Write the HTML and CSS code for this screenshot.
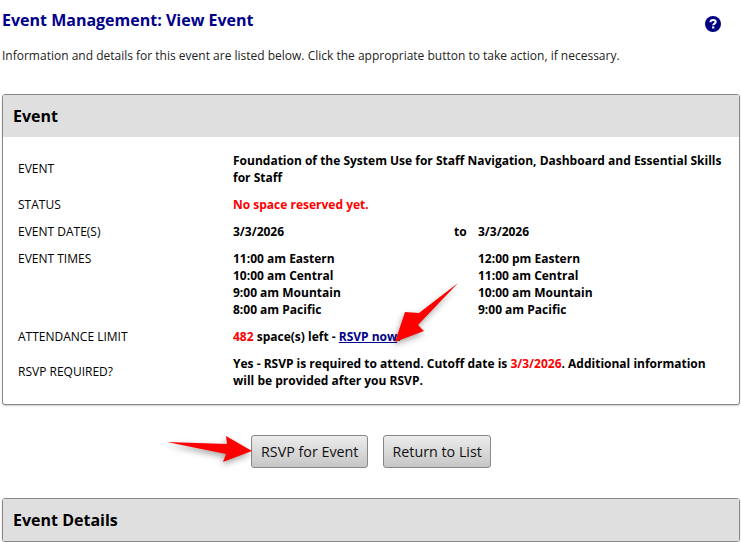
FILE: index.html
```html
<!DOCTYPE html>
<html lang="en">

<head>
    <meta charset="UTF-8">
    <title>Event Management: View Event</title>
    <link rel="stylesheet" href="styles.css">
</head>

<body>
    <div class="title-row">
        <h1>Event Management: View Event</h1>
        <svg class="help" width="16" height="16" viewBox="0 0 16 16">
            <circle cx="8" cy="8" r="8" fill="#000080"/>
            <path d="M5.4 6.2C5.5 4.7 6.6 3.9 8.1 3.9C9.6 3.9 10.7 4.8 10.7 6C10.7 7.6 8.2 7.6 8.2 9.3" fill="none" stroke="#fff" stroke-width="2"/>
            <rect x="7.1" y="10.4" width="2.2" height="2.1" fill="#fff"/>
        </svg>
    </div>
    <p class="intro">Information and details for this event are listed below. Click the appropriate button to take action, if necessary.</p>

    <div class="panel">
        <h2 class="panel-head">Event</h2>
        <div class="details">
            <div class="label mid">EVENT</div>
            <div class="value wide">Foundation of the System Use for Staff Navigation, Dashboard and Essential Skills for Staff</div>

            <div class="label">STATUS</div>
            <div class="value wide red">No space reserved yet.</div>

            <div class="label">EVENT DATE(S)</div>
            <div class="value">3/3/2026</div>
            <div class="value">to</div>
            <div class="value">3/3/2026</div>

            <div class="label">EVENT TIMES</div>
            <div class="value">11:00 am Eastern<br>10:00 am Central<br>9:00 am Mountain<br>8:00 am Pacific</div>
            <div class="value"></div>
            <div class="value">12:00 pm Eastern<br>11:00 am Central<br>10:00 am Mountain<br>9:00 am Pacific</div>

            <div class="label">ATTENDANCE LIMIT</div>
            <div class="value wide"><span class="red">482</span> space(s) left - <a href="#">RSVP now</a>.</div>

            <div class="label mid">RSVP REQUIRED?</div>
            <div class="value wide">Yes - RSVP is required to attend. Cutoff date is <span class="red">3/3/2026</span>. Additional information will be provided after you RSVP.</div>
        </div>
    </div>

    <div class="buttons">
        <button class="btn">RSVP for Event</button>
        <button class="btn btn-list">Return to List</button>
    </div>

    <div class="panel">
        <h2 class="panel-head">Event Details</h2>
    </div>

    <!-- red callout arrows drawn over the page -->
    <svg class="arrows" width="741" height="542" viewBox="0 0 741 542">
        <polygon points="458,283 419,313 405,312 395,342 424,331 418,325"/>
        <polygon points="167,442 227,444 226,436 252,451 223,462 226,454"/>
    </svg>
</body>

</html>
```

FILE: styles.css
```css
* {
    margin: 0;
    padding: 0;
    box-sizing: border-box;
}
html, body {
    width: 741px;
    height: 542px;
    overflow: hidden;
}
body {
    position: relative;
    padding: 0 1px 0 2px;
    font-family: "Open Sans", "Liberation Sans", sans-serif;
    font-size: 12px;
    line-height: 17px;
    color: #000;
    background-color: #fff;
}
.title-row {
    display: flex;
    justify-content: space-between;
    padding: 9px 19px 0 0;
    height: 47px;
}
h1 {
    font-size: 16px;
    line-height: 22px;
    font-weight: 700;
    color: #00008b;
}
.help {
    margin-top: 7px;
}
.intro {
    color: #222;
}
.panel {
    margin-top: 30px;
    border: 1px solid #888;
    border-radius: 3px;
    box-shadow: 0 1px 2px rgba(0, 0, 0, 0.2);
    background-color: #fff;
}
.panel-head {
    height: 42px;
    padding-left: 10px;
    font-size: 16px;
    line-height: 42px;
    font-weight: 700;
    background-color: #dfdfdf;
}
.details {
    display: grid;
    grid-template-columns: 215px 221px 24px 1fr;
    row-gap: 10px;
    padding: 15px;
}
.label.mid {
    margin-top: 8px;
}
.value {
    font-weight: 700;
}
.wide {
    grid-column: 2 / 5;
}
.red {
    color: #f00;
}
a {
    color: #00008b;
}
.buttons {
    display: flex;
    gap: 15px;
    margin-top: 30px;
    padding-left: 249px;
}
.btn {
    height: 33px;
    padding: 0 9px;
    font-family: inherit;
    font-size: 14.3px;
    color: #111;
    border: 1px solid #888;
    border-radius: 3px;
    background: linear-gradient(#ececec, #c6c6c6);
}
.btn-list {
    padding: 0 8px;
}
.arrows {
    position: absolute;
    top: 0;
    left: 0;
    fill: #f00;
    filter: drop-shadow(-1px 3px 3px rgba(0, 0, 0, 0.35));
}
```
